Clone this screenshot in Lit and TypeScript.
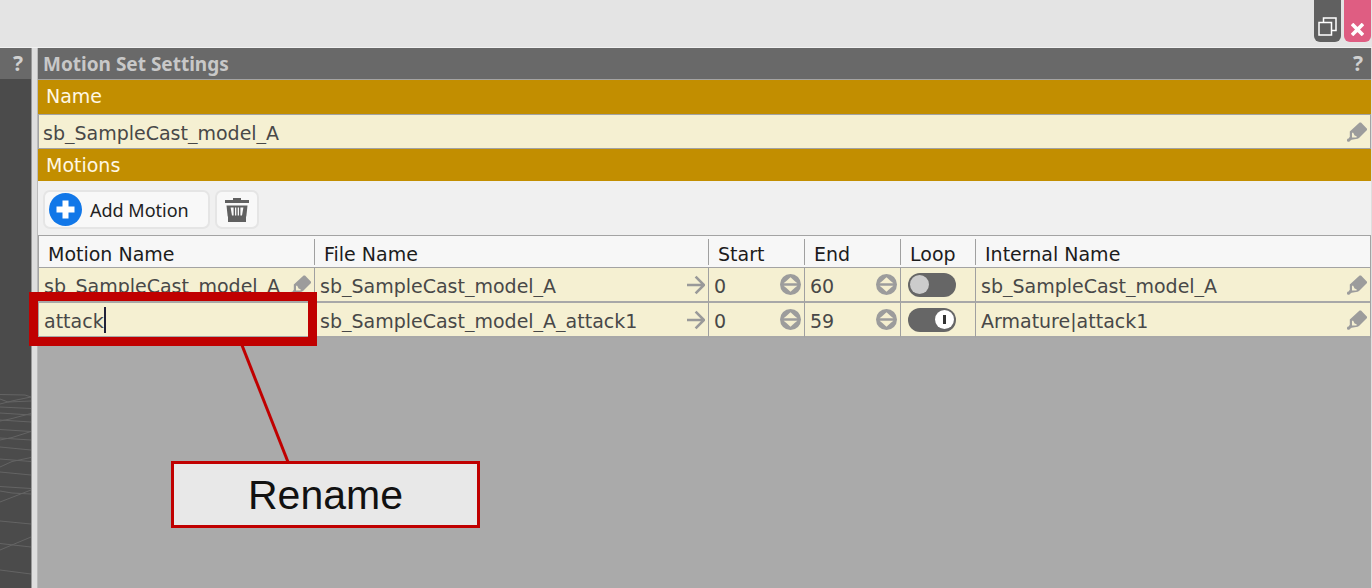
import { LitElement, html, css, svg } from "lit";
import { customElement, property, state } from "lit/decorators.js";

interface Motion {
  name: string;
  file: string;
  start: number;
  end: number;
  loop: boolean;
  internal: string;
  editing?: boolean;
}

const pencil = html`<svg class="icon" width="20" height="20" viewBox="0 0 20 20" aria-hidden="true">
  <path fill="#9c9c9c" fill-rule="evenodd" d="M12.6 0.4 L14 0.4 L20 6.8 L20 8 L12 16 L10.6 16.8 L4.6 17.8 L3.2 18.8 A1.7 1.7 0 1 1 1.6 16.4 L2.8 14.800 L2.8 9.6 Z M5 10.8 L5 15.6 L9.6 15.6 L9.6 14.2 L7.6 13.6 L6.2 10.8 Z"/>
</svg>`;

const arrow = html`<svg class="icon" width="18" height="20" viewBox="0 0 18 20" aria-hidden="true">
  <path fill="none" stroke="#999" stroke-width="2.6" d="M0 10 H16.5 M8.6 1.6 L17 10 L8.6 18.4"/>
</svg>`;

const spinner = html`<svg class="icon" width="21" height="21" viewBox="0 0 21 21" aria-hidden="true">
  <circle cx="10.5" cy="10.5" r="10.5" fill="#9c9c9c"/>
  <path fill="#f5efd0" d="M10.5 3.2 L14.6 7 V9.3 H6.4 V7 Z M3.6 9.3 L6.4 7 V9.3 Z M17.4 9.3 L14.6 7 V9.3 Z M10.5 17.8 L14.6 14 V11.7 H6.4 V14 Z M3.6 11.7 L6.4 14 V11.7 Z M17.4 11.7 L14.6 14 V11.7 Z"/>
</svg>`;

@customElement("grid-viewport")
export class GridViewport extends LitElement {
  static styles = css`
    :host { display: flex; flex-direction: column; background: #4b4b4b; }
    .bar {
      height: 31px; background: #696969; display: flex; justify-content: flex-end;
      align-items: center; padding: 0 8px 2px 0; box-sizing: border-box;
    }
    button {
      border: 0; background: none; padding: 0; color: #d0d0d0;
      font: bold 21px/24px "Noto Sans", sans-serif;
    }
    .floor { margin-top: auto; display: block; width: 100%; height: 200px; }
  `;
  render() {
    const lines = [
      "M0 6.5 L25 7 L31 9", "M0 11 L8 14 L31 13", "M0 16 L14 12.5 L31 9", "M0 19 L31 20.5",
      "M0 25 L31 27", "M0 33 L10 31 L31 25.5", "M0 32 L31 34", "M0 41.5 L31 43.5",
      "M0 52 L12 49.5 L31 43.5", "M0 50 L31 52", "M0 59 L31 62", "M0 71 L31 73.5",
      "M0 79 L12 73.5 L31 69.5", "M0 84 L31 87", "M0 98.5 L31 100.5", "M0 114 L31 102",
      "M0 103 L12 105 L31 106", "M0 133 L31 136", "M0 155.5 L31 159", "M0 162 L31 149",
      "M0 182 L31 186",
    ];
    return html`
      <div class="bar"><button aria-label="Viewport help">?</button></div>
      <svg class="floor" viewBox="0 0 31 200" preserveAspectRatio="none" aria-hidden="true">
        ${lines.map((d) => svg`<path d=${d} fill="none" stroke="#646464" stroke-width="1"/>`)}
      </svg>`;
  }
}

@customElement("motion-table")
export class MotionTable extends LitElement {
  @property({ attribute: false }) motions: Motion[] = [];

  static styles = css`
    :host { display: block; }
    table {
      width: 100%; table-layout: fixed; border-spacing: 0; border: 1px solid #a3a3a3;
      border-bottom: 0; box-sizing: border-box;
    }
    .c-name { width: 276px; }
    .c-file { width: 394px; }
    .c-num { width: 96px; }
    .c-loop { width: 75px; }
    th {
      padding: 3px 0 2px; background: #f7f7f7; border-bottom: 1px solid #a3a3a3;
      font-weight: normal; text-align: left; color: #1c1c1c;
    }
    .head { display: block; height: 26px; line-height: 30px; padding-left: 9px; border-right: 1px solid #a0a0a0; }
    th:last-child .head { border-right: 0; }
    td {
      position: relative; padding: 0; height: 33px; background: #f5f0d2;
      border-right: 1px solid #a0a0a0; border-bottom: 2px solid #a8a8a8;
    }
    td:last-child { border-right: 0; }
    .cell { display: flex; align-items: center; height: 33px; padding: 0 3px 0 5px; }
    .text {
      flex: 1; min-width: 0; width: 0; height: 33px; box-sizing: border-box; border: 0; outline: 0;
      background: none; padding: 3px 0 0; margin: 0; color: #484848; font: inherit;
    }
    .edit { border: 0; background: none; padding: 0; display: flex; }
    .icon { display: block; flex: none; }
    .toggle {
      appearance: none; margin: 0 0 0 2px; width: 48px; height: 24px; border-radius: 12px; background: #666;
      display: flex; align-items: center; padding: 2px;
    }
    .toggle::before { content: ""; width: 19px; height: 19px; border-radius: 50%; background: #ccc; }
    .toggle:checked { justify-content: flex-end; }
    .toggle:checked::before {
      background: linear-gradient(#333, #333) center / 3px 9px no-repeat, #fff;
    }
    .caret { position: absolute; left: 65px; top: 4px; width: 2px; height: 26px; background: #22223a; }
  `;

  private textCell(label: string, value: string | number, action: string, icon: unknown, editing = false) {
    return html`<td>
      <div class="cell">
        <input class="text" aria-label=${label} .value=${String(value)} />
        ${editing
          ? html`<span class="caret"></span>`
          : html`<button class="edit" aria-label=${action}>${icon}</button>`}
      </div>
    </td>`;
  }

  render() {
    const heads = ["Motion Name", "File Name", "Start", "End", "Loop", "Internal Name"];
    return html`<table>
      <colgroup>
        <col class="c-name" /><col class="c-file" /><col class="c-num" /><col class="c-num" />
        <col class="c-loop" /><col />
      </colgroup>
      <thead><tr>${heads.map((h) => html`<th scope="col"><span class="head">${h}</span></th>`)}</tr></thead>
      <tbody>
        ${this.motions.map((m) => html`<tr>
          ${this.textCell("Motion name", m.name, "Edit motion name", pencil, m.editing)}
          ${this.textCell("File name", m.file, "Open file", arrow)}
          ${this.textCell("Start", m.start, "Adjust start", spinner)}
          ${this.textCell("End", m.end, "Adjust end", spinner)}
          <td><div class="cell"><input class="toggle" type="checkbox" aria-label="Loop" .checked=${m.loop} /></div></td>
          ${this.textCell("Internal name", m.internal, "Edit internal name", pencil)}
        </tr>`)}
      </tbody>
    </table>`;
  }
}

@customElement("app-root")
export class AppRoot extends LitElement {
  @state() private motions: Motion[] = [
    { name: "sb_SampleCast_model_A", file: "sb_SampleCast_model_A", start: 0, end: 60, loop: false, internal: "sb_SampleCast_model_A" },
    { name: "attack", file: "sb_SampleCast_model_A_attack1", start: 0, end: 59, loop: true, internal: "Armature|attack1", editing: true },
  ];

  static styles = css`
    :host {
      display: flex; flex-direction: column; position: relative; min-height: 100vh; overflow: hidden;
      background: #dedede; font: 19px/24px "DejaVu Sans", Verdana, sans-serif;
    }
    .top {
      height: 48px; box-sizing: border-box; background: #e4e4e4; border-bottom: 1px solid #f2f2f2;
      display: flex; justify-content: flex-end; align-items: flex-start; gap: 3px; padding-right: 1px;
    }
    .win {
      width: 27px; height: 42px; border: 0; border-radius: 0 0 6px 6px; background: #606060;
      padding: 0 0 6px; display: flex; justify-content: center; align-items: flex-end;
    }
    .close { background: #df5d82; }
    .main { flex: 1; display: flex; }
    grid-viewport { width: 31px; flex: none; border-right: 1px solid #999; }
    .panel {
      flex: 1; min-width: 0; margin-left: 5px; margin-right: 1px; background: #aaa;
      border-left: 1px solid #bbb;
    }
    .title {
      margin: 0; height: 31px; background: #696969; border-bottom: 1px solid #a3a3a3; color: #c8c8c8;
      display: flex; align-items: center; justify-content: space-between; padding: 0 8px 0 5px;
      font: bold 19px/24px "Noto Sans", sans-serif;
    }
    .title h1 { margin: 0; font: inherit; }
    .help { border: 0; background: none; padding: 0 0 2px; color: #d0d0d0; font: bold 21px/24px "Noto Sans", sans-serif; }
    .section {
      margin: 0; height: 32px; line-height: 32px; background: #c28e00; color: #fff8e4; padding: 0 8px;
      font-size: 19px; font-weight: normal;
    }
    .first { height: 34px; }
    .name {
      display: flex; align-items: center; height: 33px; background: #f5f0d2; border: 1px solid #a3a3a3;
      padding: 0 3px 0 4px;
    }
    .name input {
      flex: 1; min-width: 0; height: 33px; box-sizing: border-box; border: 0; outline: 0; background: none;
      padding: 3px 0 0; color: #484848; font: inherit;
    }
    .edit { border: 0; background: none; padding: 0; display: flex; }
    .tools { display: flex; gap: 5px; background: #f0f0f0; padding: 9px 5px 6px; }
    .tool {
      height: 39px; box-sizing: border-box; border: 2px solid #e5e5e5; border-radius: 7px; background: #f8f8f8;
      display: flex; align-items: center; gap: 8px; padding: 0 19px 0 4px; color: #222;
      font: 18px/24px "Noto Sans", sans-serif;
    }
    .trash { padding: 0 8px; }
    .mark { position: absolute; left: 29px; top: 292px; width: 288px; height: 54px; box-sizing: border-box; border: 9px solid #c00000; pointer-events: none; }
    .leader { position: absolute; left: 230px; top: 344px; pointer-events: none; }
    .callout {
      position: absolute; left: 171px; top: 461px; width: 309px; height: 67px; box-sizing: border-box;
      border: 3px solid #c00000; background: #e8e8e8; color: #111; text-align: center;
      font: 41px/62px "Liberation Sans", Arial, sans-serif;
    }
  `;

  render() {
    return html`
      <header class="top">
        <button class="win" aria-label="Restore window">
          <svg width="19" height="19" viewBox="0 0 19 19" fill="none" stroke="#fff" stroke-width="1.5" aria-hidden="true">
            <path d="M1 5.5 H13.5 V18 H1 Z M5.5 5.5 V1 H18 V13.5 H13.5"/>
          </svg>
        </button>
        <button class="win close" aria-label="Close window">
          <svg width="13" height="13" viewBox="0 0 13 13" stroke="#fff" stroke-width="3.6" aria-hidden="true">
            <path d="M1 1 L12 12 M12 1 L1 12"/>
          </svg>
        </button>
      </header>
      <div class="main">
        <grid-viewport></grid-viewport>
        <main class="panel">
          <div class="title"><h1>Motion Set Settings</h1><button class="help" aria-label="Panel help">?</button></div>
          <h2 class="section first"><label for="set-name">Name</label></h2>
          <div class="name">
            <input id="set-name" .value=${"sb_SampleCast_model_A"} />
            <button class="edit" aria-label="Edit name">${pencil}</button>
          </div>
          <h2 class="section">Motions</h2>
          <div class="tools">
            <button class="tool">
              <svg width="33" height="33" viewBox="0 0 33 33" aria-hidden="true">
                <circle cx="16.5" cy="16.5" r="16.5" fill="#1177e8"/>
                <path fill="#fff" d="M13.5 7.5 h6 v6 h6 v6 h-6 v6 h-6 v-6 h-6 v-6 h6 z"/>
              </svg>
              Add Motion
            </button>
            <button class="tool trash" aria-label="Delete motion">
              <svg width="24" height="24" viewBox="0 0 24 24" aria-hidden="true">
                <path fill="#606060" fill-rule="evenodd" d="M8 0 H16 V2 H24 V5 H0 V2 H8 Z M1.5 7.5 H22.5 L21.3 18.5 H21 V24 H3 V18.5 H2.700 Z M5.6 9.500 L7 17.5 H8.600 V9.500 Z M10 9.500 V17.5 H11.300 V9.500 Z M12.700 9.500 V17.5 H14 V9.500 Z M15.400 9.500 V17.5 H17 L18.400 9.500 Z"/>
              </svg>
            </button>
          </div>
          <motion-table .motions=${this.motions}></motion-table>
        </main>
      </div>
      <div class="mark"></div>
      <svg class="leader" width="64" height="120" viewBox="0 0 64 120" aria-hidden="true">
        <path d="M11.5 0 L58 118" stroke="#c00000" stroke-width="3" fill="none"/>
      </svg>
      <div class="callout">Rename</div>`;
  }
}
